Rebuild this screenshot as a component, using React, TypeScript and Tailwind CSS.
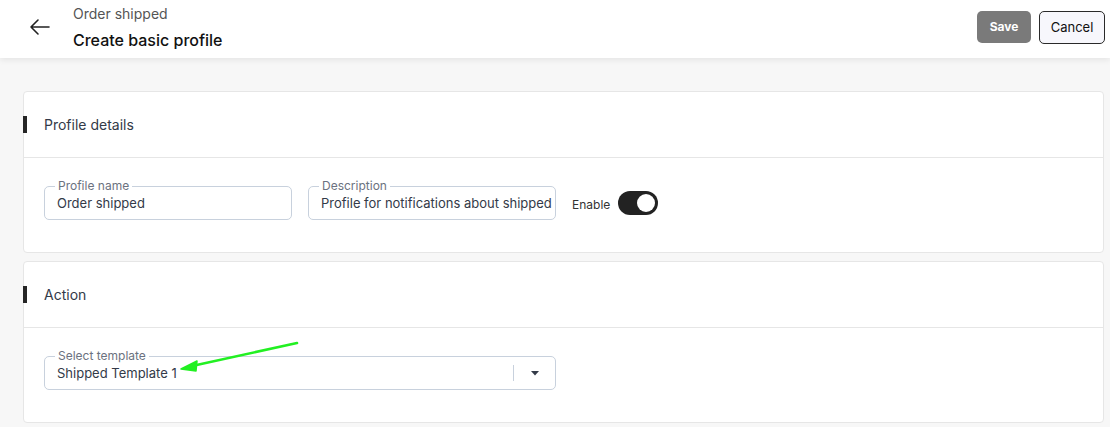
import React from "react";

function OutlinedField({ label, value, width, children }: { label: string; value: string; width: string; children?: React.ReactNode }) {
  return (
    <div className={`${width} relative h-[34px] shrink-0 rounded-[5px] border border-[#c8d1dd] pl-[12px] pr-[3px] flex items-center`}>
      <div className="absolute -top-[8px] left-[10px] px-[3px] bg-white text-[12px] leading-[14px] text-[#6b7280]">{label}</div>
      <div className="flex-1 min-w-0 text-[13px] leading-[16px] text-[#333a48] whitespace-nowrap overflow-hidden">{value}</div>
      {children}
    </div>
  );
}

function Card({ title, children, bodyClass }: { title: string; children: React.ReactNode; bodyClass: string }) {
  return (
    <div className="ml-[23px] mr-[6px] bg-white border border-[#e6e6e6] rounded-[4px]">
      <div className="h-[66px] flex items-center border-b border-[#e6e6e6]">
        <div className="w-[4px] h-[17px] bg-[#262626] -ml-px"></div>
        <div className="ml-[17px] text-[14px] text-[#333a48]">{title}</div>
      </div>
      <div className={bodyClass}>{children}</div>
    </div>
  );
}

export default function App() {
  return (
    <div className="relative w-[1110px] h-[427px] bg-[#f7f7f7] overflow-hidden" style={{ fontFamily: "Inter, 'Noto Sans', sans-serif" }}>
      <div className="h-[58px] bg-white shadow-[0_2px_6px_rgba(0,0,0,0.08)] flex items-start relative z-10">
        <div className="w-[73px] flex pl-[29px] pt-[18px]">
          <svg width="22" height="18" viewBox="0 0 22 18" fill="none" stroke="#222" strokeWidth="1.6" strokeLinecap="round" strokeLinejoin="round">
            <path d="M20 9H2M9 2L2 9l7 7" />
          </svg>
        </div>
        <div className="flex flex-col pt-[5px]">
          <div className="text-[14px] leading-[18px] text-[#555]">Order shipped</div>
          <div className="text-[16px] leading-[20px] mt-[7px] font-medium text-[#111]">Create basic profile</div>
        </div>
        <div className="ml-auto flex gap-[8px] pt-[11px] pr-[5px]">
          <button className="w-[54px] h-[32px] rounded-[5px] bg-[#7a7a7a] text-white text-[12px] font-bold">Save</button>
          <button className="w-[66px] h-[33px] rounded-[5px] bg-[#f7f7fc] border border-[#2a2a2a] text-[#111] text-[13px]">Cancel</button>
        </div>
      </div>

      <div className="pt-[33px] flex flex-col gap-[8px]">
        <Card title="Profile details" bodyClass="h-[94px] flex items-start pl-[20px] pt-[28px]">
          <OutlinedField label="Profile name" value="Order shipped" width="w-[248px]" />
          <div className="w-[16px] shrink-0"></div>
          <OutlinedField label="Description" value="Profile for notifications about shipped orders" width="w-[248px]" />
          <div className="ml-[16px] text-[12px] text-[#333] mt-[10px]">Enable</div>
          <div className="ml-[8px] w-[40px] h-[24px] rounded-full bg-[#222] flex items-center justify-end pr-[3px] mt-[5px]">
            <div className="w-[18px] h-[18px] rounded-full bg-white"></div>
          </div>
        </Card>
        <Card title="Action" bodyClass="h-[94px] flex items-start pl-[20px] pt-[28px]">
          <OutlinedField label="Select template" value="Shipped Template 1" width="w-[512px]">
            <div className="w-px h-[16px] bg-[#c8d1dd] mr-[17px]"></div>
            <svg width="8" height="5" viewBox="0 0 8 5" className="mr-[13px]"><path d="M0 0h8L4 4.5z" fill="#333a48" /></svg>
          </OutlinedField>
        </Card>
      </div>

      <svg className="absolute left-0 top-0 pointer-events-none" width="1110" height="427">
        <line x1="297" y1="343" x2="192" y2="366" stroke="#22f022" strokeWidth="2.6" strokeLinecap="round" />
        <path d="M181 369 L197 361 L196 371 Z" fill="#22f022" stroke="#22f022" strokeWidth="1.5" strokeLinejoin="round" />
      </svg>
    </div>
  );
}
